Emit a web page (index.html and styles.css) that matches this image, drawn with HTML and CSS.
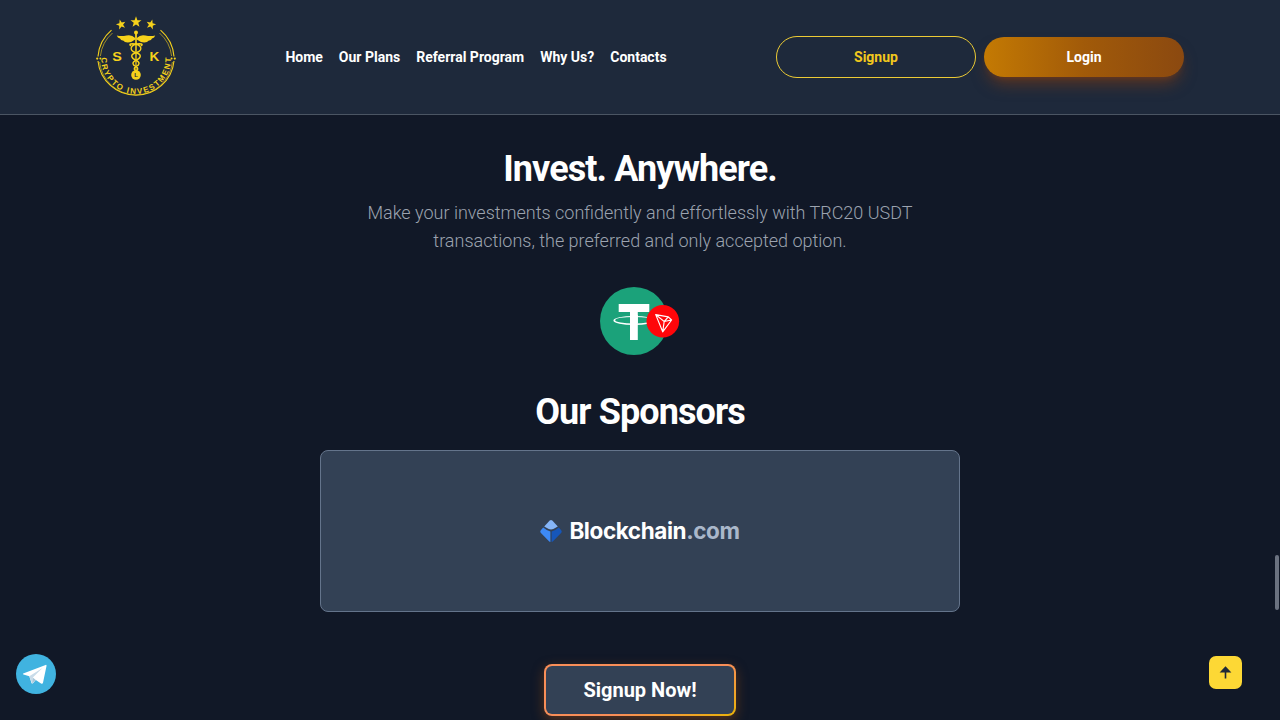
FILE: index.html
```html
<!DOCTYPE html>
<html lang="en">
<head>
<meta charset="utf-8">
<title>SK Crypto Investment</title>
<link rel="stylesheet" href="styles.css">
</head>
<body>
<header class="header">
  <svg class="logo" viewBox="10 4 80 90" fill="none" stroke="#f6d21b">
    <defs>
      <path id="ring-text" d="M15.2 48.5V51A34.8 34.8 0 0 0 84.8 51V45"/>
      <path id="star" d="M0-5.4 1.3-1.7 5.1-1.7 2.1.7 3.2 4.5 0 2.2-3.2 4.5-2.1.7-5.1-1.7-1.3-1.7Z"/>
    </defs>
    <path stroke-width="1.1" d="M25.5 22.2A38.5 38.5 0 0 0 12 48.5M12 53A38.2 38.2 0 0 0 88 53M88 48.5A38.5 38.5 0 0 0 74.5 22.2"/>
    <path stroke-width=".6" d="M26.5 25A35.8 35.8 0 0 0 14.4 48M13.6 54A36.6 36.6 0 0 0 86.4 54M85.6 48A35.8 35.8 0 0 0 73.5 25"/>
    <g fill="#f6d21b" stroke="none">
      <use href="#star" transform="translate(50 14) scale(1.08)"/>
      <use href="#star" transform="translate(35 16.5) rotate(-15) scale(.95)"/>
      <use href="#star" transform="translate(65 16.5) rotate(15) scale(.95)"/>
      <circle cx="11.2" cy="50.6" r="1.1"/><circle cx="14.4" cy="50.6" r="1"/>
      <circle cx="85.6" cy="50.6" r="1"/><circle cx="88.8" cy="50.6" r="1.1"/>
      <circle cx="50" cy="24.5" r="2"/>
      <path d="M49.2 30Q45.5 26.2 40.5 27.5 35 28.6 30.8 27.4 31.5 29.7 34 30.5 34.5 32.4 37.5 32.7 38.5 34.5 42 34.4 46 34.2 49.2 31.5ZM50.8 30Q54.5 26.2 59.5 27.5 65 28.6 69.2 27.4 68.5 29.7 66 30.5 65.5 32.4 62.5 32.7 61.5 34.5 58 34.4 54 34.2 50.8 31.5Z"/>
      <path d="M49.1 26h1.8l-.4 38h-1Z"/>
      <circle cx="50" cy="67" r="4.8"/>
    </g>
    <path stroke-width="1.4" d="M45 38Q42 35.7 46.5 35.7C56 36 57.5 42.5 50.5 44.5C43 46.5 45.5 50.5 50 52.3C54.5 54.2 53.5 57 50 58.6C47.3 60 48 62 50 63M55 38Q58 35.7 53.5 35.7C44 36 42.5 42.5 49.5 44.5C57 46.5 54.5 50.5 50 52.3C45.5 54.2 46.5 57 50 58.6C52.7 60 52 62 50 63"/>
    <g class="logo-text">
      <text class="logo-letter" x="26.3" y="53.2" textLength="9.6" lengthAdjust="spacingAndGlyphs">S</text>
      <text class="logo-letter" x="63.6" y="53.2" textLength="9.8" lengthAdjust="spacingAndGlyphs">K</text>
      <text class="logo-coin" x="50" y="69.2">L</text>
      <text class="logo-ring"><textPath href="#ring-text" startOffset="1" textLength="112">CRYPTO INVESTMENT</textPath></text>
    </g>
  </svg>
  <nav class="nav">
    <a>Home</a><a>Our Plans</a><a>Referral Program</a><a>Why Us?</a><a>Contacts</a>
  </nav>
  <div class="actions">
    <a class="button button-signup">Signup</a>
    <a class="button button-login">Login</a>
  </div>
</header>
<main class="main">
  <h2 class="title">Invest. Anywhere.</h2>
  <p class="lead">Make your investments confidently and effortlessly with TRC20 USDT transactions, the preferred and only accepted option.</p>
  <svg class="coin" viewBox="0 0 80 70">
    <circle cx="34" cy="34" r="34" fill="#1ba27a"/>
    <path fill="#fff" d="M18.7 17h30.6v8H37.8V53H30V25H18.7Z"/>
    <path fill="#fff" fill-rule="evenodd" d="M13.4 33.5a20.6 4.6 0 1 0 41.2 0a20.6 4.6 0 1 0-41.2 0ZM15.2 33.2a18.8 3.3 0 1 0 37.6 0a18.8 3.3 0 1 0-37.6 0Z"/>
    <path fill="#fff" d="M30 28h7.8v8H30Z"/>
    <circle cx="62.8" cy="34.2" r="16.3" fill="#ff060a"/>
    <path fill="none" stroke="#fff" stroke-width="1.15" stroke-linejoin="round" d="M55.7 27.6 68.3 29.9 71.6 33 62.7 44.8ZM55.7 27.6 64.2 34.5 68.3 29.9M71.6 33 64.2 34.5 62.7 44.8"/>
  </svg>
  <h2 class="title sponsors-title">Our Sponsors</h2>
  <section class="sponsors">
    <svg class="cube" viewBox="0 0 22 22">
      <path fill="#85b5f8" d="M9.7.6Q11-.6 12.3.6L17.8 6.4Q14 8.9 11 9.5 8 8.9 4.2 6.4Z"/>
      <path fill="#3d89f5" d="M3.2 7.6Q6.5 10.6 10.4 11.4V22Q9.5 21.8 9 21.2L.7 12.7Q-.2 11.6.8 10.3Z"/>
      <path fill="#1656b9" d="M18.8 7.6Q15.5 10.6 11.6 11.4V22Q12.5 21.8 13 21.2L21.3 12.7Q22.2 11.6 21.2 10.3Z"/>
    </svg>
    <span class="sponsor-name">Blockchain<span class="sponsor-domain">.com</span></span>
  </section>
  <a class="cta">Signup Now!</a>
</main>
<svg class="telegram" viewBox="0 0 40 40">
  <circle cx="20" cy="20" r="20" fill="#40b3e0"/>
  <path fill="#fff" d="M7.2 19.6 29.6 10.9Q30.7 10.6 30.5 12L27 28.7Q26.6 30.5 25 29.5L19.8 26 17.2 29Q16 30.2 15.5 29L13.3 22.3 7.5 20.6Q6.4 20.2 7.2 19.6Z"/>
  <path fill="#c9dce9" d="M13.3 22.3 26.5 14 16.8 23.5 16 29.5Z"/>
  <path fill="#a9c6d8" d="M16.8 23.5 19.8 26 16 29.5Z"/>
</svg>
<a class="to-top">
  <svg class="to-top-icon" viewBox="0 0 13 13"><path fill="#1f2937" d="M6.5.3 12.4 6.4H7.3V12.6H5.7V6.4H.6Z"/></svg>
</a>
<div class="scroll-thumb"></div>
</body>
</html>
```
FILE: styles.css
```css
* { box-sizing: border-box; }
body {
  margin: 0;
  height: 720px;
  overflow: hidden;
  background: #111827;
  color: #fff;
  font-family: Roboto, "Liberation Sans", sans-serif;
}
.header {
  display: flex;
  align-items: center;
  justify-content: space-between;
  height: 115px;
  padding: 0 96px;
  background: #1e293b;
  border-bottom: 1px solid #4b5563;
}
.logo { width: 80px; height: 90px; overflow: visible; }
.logo-text { fill: #f6d21b; stroke: none; font-family: "Liberation Sans", sans-serif; font-weight: 700; }
.logo-letter { font-size: 12.2px; }
.logo-coin { font-size: 6px; fill: #1e293b; text-anchor: middle; }
.logo-ring { font-size: 8px; }
.nav { display: flex; gap: 16px; font-size: 14px; font-weight: 700; line-height: 20px; }
.actions { display: flex; align-items: center; gap: 8px; }
.button {
  display: flex;
  align-items: center;
  justify-content: center;
  width: 200px;
  height: 40px;
  border-radius: 21px;
  font-size: 14px;
  font-weight: 700;
}
.button-signup { height: 42px; border: 1px solid #eccb35; color: #f2c81d; }
.button-login {
  background: linear-gradient(90deg, #c47a03, #a15a09 50%, #8b4910);
  box-shadow: 0 10px 15px -3px rgba(146, 64, 14, .5), 0 4px 6px -4px rgba(146, 64, 14, .5);
}
.main { display: flex; flex-direction: column; align-items: center; padding-top: 34px; }
.title { margin: 0; font-size: 36px; font-weight: 700; line-height: 40px; letter-spacing: -.9px; }
.lead {
  width: 576px;
  margin: 10px 0 0;
  color: #9ca3af;
  font-size: 18px;
  font-weight: 300;
  line-height: 28px;
  text-align: center;
}
.coin { width: 80px; height: 70px; margin-top: 32px; }
.sponsors-title { margin-top: 35px; }
.sponsors {
  display: flex;
  align-items: center;
  justify-content: center;
  gap: 7px;
  width: 640px;
  height: 162px;
  margin-top: 18px;
  border: 1px solid #64748b;
  border-radius: 8px;
  background: #334155;
}
.cube { width: 22px; height: 22px; }
.sponsor-name { font-family: Inter, sans-serif; font-size: 22.5px; font-weight: 700; letter-spacing: -.42px; line-height: 28px; }
.sponsor-domain { color: #aab7ca; }
.cta {
  display: flex;
  align-items: center;
  justify-content: center;
  width: 192px;
  height: 52px;
  margin-top: 52px;
  border: 2px solid transparent;
  border-radius: 8px;
  background: linear-gradient(#334155, #334155) padding-box, linear-gradient(155deg, #f98e58, #f98e58 60%, #eab308) border-box;
  box-shadow: 0 4px 12px rgba(154, 75, 18, .5);
  font-size: 20px;
  font-weight: 700;
}
.telegram { position: fixed; left: 16px; top: 654px; width: 40px; height: 40px; }
.to-top {
  position: fixed;
  right: 38px;
  top: 656px;
  display: flex;
  align-items: center;
  justify-content: center;
  width: 33px;
  height: 33px;
  border-radius: 7px;
  background: #fdd835;
}
.to-top-icon { width: 13px; height: 13px; }
.scroll-thumb { position: fixed; right: 1px; top: 555px; width: 4px; height: 55px; border-radius: 2px; background: #6b7280; }
```
